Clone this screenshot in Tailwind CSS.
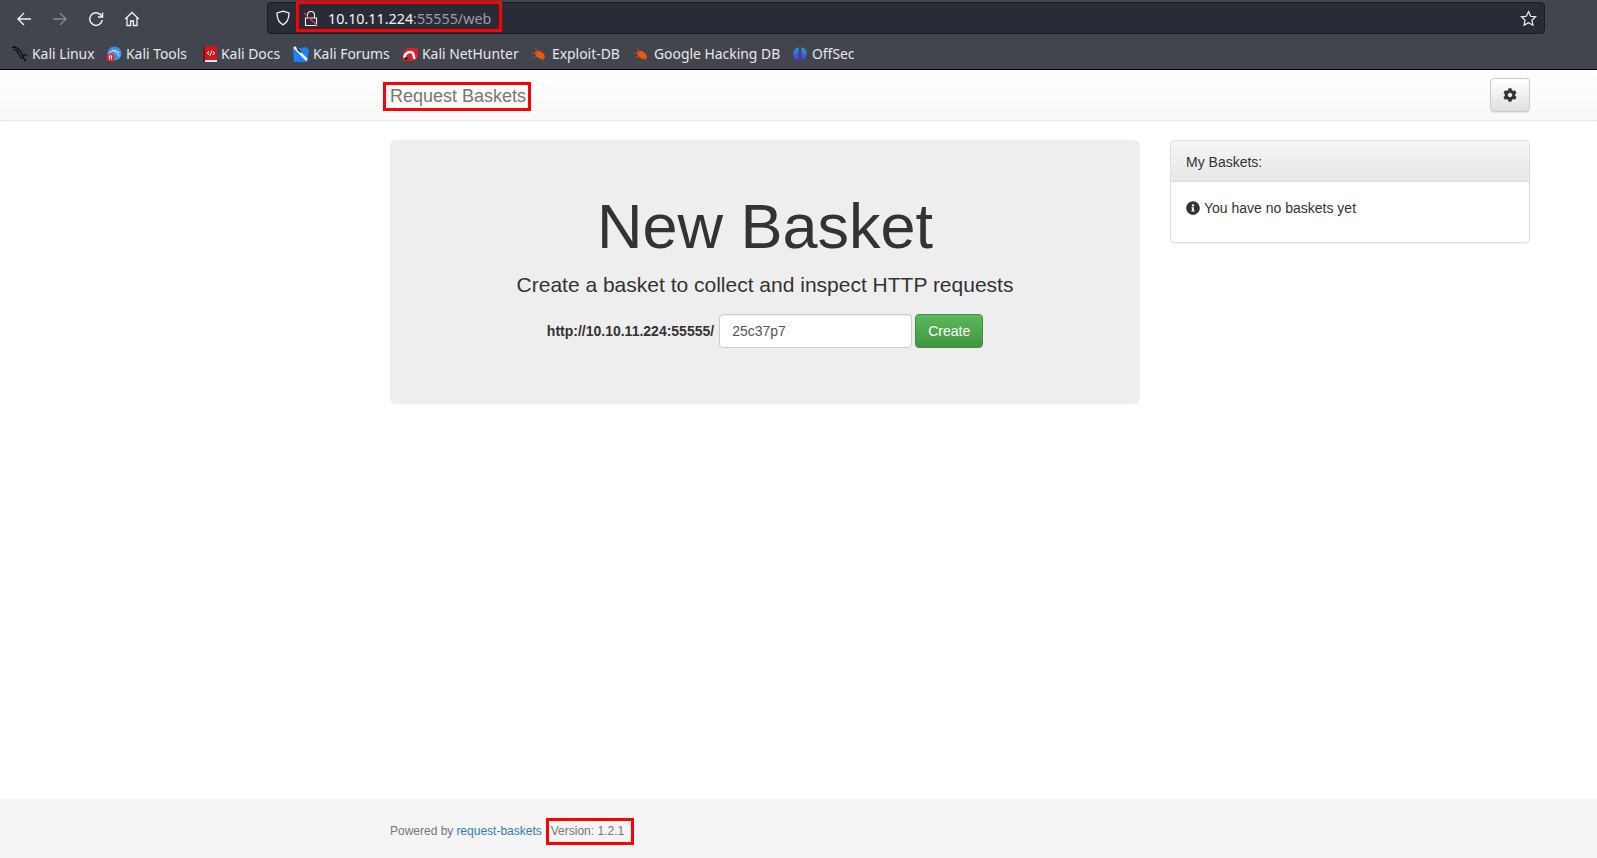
<!DOCTYPE html>
<html lang="en">

<head>
    <meta charset="UTF-8" />
    <title>Request Baskets</title>
    <script src="https://cdn.jsdelivr.net/npm/@tailwindcss/browser@4"></script>
</head>

<body class="relative h-[858px] w-[1597px] overflow-hidden bg-white font-['Liberation_Sans',sans-serif] text-[14px] text-[#333]">
    <!-- browser chrome -->
    <div class="h-[70px] bg-[#42454e] border-b border-black font-['Noto_Sans',sans-serif]">
        <div class="flex h-[36px] items-center pl-[16px]">
            <div class="mt-[2px] flex w-[251px] items-center gap-[20px] text-[#f2f2f2]">
                <svg class="w-[16px] h-[16px]" viewBox="0 0 16 16" fill="none" stroke="currentColor" stroke-width="1.400"><path d="M15 8H2M8 2L2 8l6 6" /></svg>
                <svg class="w-[16px] h-[16px] text-[#85878d]" viewBox="0 0 16 16" fill="none" stroke="currentColor" stroke-width="1.400"><path d="M1 8h13M8 2l6 6-6 6" /></svg>
                <svg class="w-[16px] h-[16px]" viewBox="0 0 16 16" fill="none" stroke="currentColor" stroke-width="1.500"><path d="M13.800 5.500A6.300 6.300 0 1 0 14.300 9" /><path d="M14.500 1.500v4.600H10" /></svg>
                <svg class="w-[16px] h-[16px]" viewBox="0 0 16 16" fill="none" stroke="currentColor" stroke-width="1.300"><path d="M1.200 8L8 1.500 14.800 8M3 6.500V14.500h3.600V10h2.800v4.500H13V6.500" /></svg>
            </div>
            <div class="flex h-[32px] w-[1278px] items-center rounded-[4px] border border-[#1b1c22] bg-[#292c37] pl-[7px] pr-[7px]">
                <svg class="w-[16px] h-[16px] text-[#f2f2f2]" viewBox="0 0 16 16" fill="none" stroke="currentColor" stroke-width="1.300"><path d="M8 1.200l6 1.800c0 5.500-1.500 9.500-6 11.800C3.500 12.500 2 8.500 2 3z" /></svg>
                <svg class="ml-[12px] w-[16px] h-[17px] text-[#f2f2f2]" viewBox="0 0 16 17" fill="none" stroke="currentColor" stroke-width="1.100"><path d="M4.500 8V5a3.500 3.500 0 0 1 7 0v3M2.500 8h11v7.500h-11z" /><path d="M1 3l13.500 13" stroke="#ff2f4a" stroke-width="1.200" /></svg>
                <span class="ml-[9px] mt-[2px] text-[14.300px] text-[#f5f5f5]">10.10.11.224<span class="text-[#9a9ca3]">:55555/web</span></span>
                <svg class="ml-auto mt-[1px] w-[17px] h-[17px] text-[#f2f2f2]" viewBox="0 0 16 16" fill="none" stroke="currentColor" stroke-width="1.100"><path d="M8 1.500l2 4.400 4.700.5-3.500 3.200 1 4.700L8 11.900l-4.200 2.400 1-4.700L1.300 6.400 6 5.900z" /></svg>
            </div>
        </div>
        <div class="flex h-[33px] items-center pt-[4px] text-[13.900px] text-[#e8e8ea]">
            <span class="ml-[12px] flex w-[94px] items-center gap-[4px]">
                <svg class="w-[16px] h-[16px] shrink-0" viewBox="0 0 16 16" fill="none" stroke="#0b0b0b" stroke-width="1.200"><path d="M0 1.500c3-.5 5 .3 7 2 2 1.800 3 4 3.500 6 .4 1.800 1.500 3.500 3.500 5.500M1.500 3.500c2 .2 3.500 1 5 2.500M2 .5l3 1.500M5 6.500c1.500.5 2.500 1.500 3 3 .5 1.500 1 2.500 2 3.500M11 9c1.500-.5 3-.5 4 .5" /></svg>
                Kali Linux
            </span>
            <span class="flex w-[97px] items-center gap-[4px]">
                <svg class="w-[16px] h-[16px] shrink-0" viewBox="0 0 16 16"><circle cx="8.500" cy="7.500" r="7" fill="#3f8fe8" /><path d="M2.500 8c3-4 7-4.500 11-1M6 4c3 1 5.500 3 7.500 6.500" fill="none" stroke="#dcecff" stroke-width="1" /><circle cx="4.500" cy="11.500" r="4" fill="#e8262c" /><path d="M2.800 10h3.400M3.500 10v3.500M5.500 10v3.500" stroke="#fff" stroke-width="1" /></svg>
                Kali Tools
            </span>
            <span class="flex w-[90px] items-center gap-[4px]">
                <svg class="w-[14px] h-[16px] shrink-0" viewBox="0 0 14 16"><path d="M0 1h2v15H0z" fill="#7d1414" /><path d="M2 0h12v14H2z" fill="#d0161b" /><path d="M2 14h12v2H2z" fill="#e9e9e9" /><path d="M6 5L4.500 7 6 9M10 5l1.500 2L10 9M8.800 4.500L7.200 9.500" fill="none" stroke="#fff" stroke-width="1" /></svg>
                Kali Docs
            </span>
            <span class="flex w-[109px] items-center gap-[4px]">
                <svg class="w-[16px] h-[16px] shrink-0" viewBox="0 0 16 16"><path d="M0 3L13 1l3 3-2 12H1z" fill="#1f7ff0" /><path d="M1 1l13 13" stroke="#f2f2f2" stroke-width="2.500" /><path d="M4 2.500l4 4" stroke="#222" stroke-width="1.500" /></svg>
                Kali Forums
            </span>
            <span class="flex w-[130px] items-center gap-[4px]">
                <svg class="w-[16px] h-[16px] shrink-0" viewBox="0 0 16 16"><path d="M5 2h11v9l-3 4H1V6z" fill="#d51f2d" /><path d="M2.500 12a5.500 5.500 0 0 1 8.500-5l1.500 6" fill="none" stroke="#f5f5f5" stroke-width="2.500" /><circle cx="4" cy="12.500" r="1.500" fill="#222" /></svg>
                Kali NetHunter
            </span>
            <span class="flex w-[102px] items-center gap-[6px]">
                <svg class="w-[14px] h-[14px] shrink-0" viewBox="0 0 14 14"><ellipse cx="8" cy="8" rx="5.500" ry="3.500" transform="rotate(35 8 8)" fill="#e8590f" /><path d="M0 6h5M1 11l4-2M3 1l3 4M12 14l-2-3" stroke="#b94a10" stroke-width="1" /></svg>
                Exploit-DB
            </span>
            <span class="flex w-[159px] items-center gap-[6px]">
                <svg class="w-[14px] h-[14px] shrink-0" viewBox="0 0 14 14"><ellipse cx="8" cy="8" rx="5.500" ry="3.500" transform="rotate(35 8 8)" fill="#e8590f" /><path d="M0 6h5M1 11l4-2M3 1l3 4M12 14l-2-3" stroke="#b94a10" stroke-width="1" /></svg>
                Google Hacking DB
            </span>
            <span class="flex items-center gap-[5px]">
                <svg class="w-[14px] h-[16px] shrink-0" viewBox="0 0 14 16">
                    <defs><linearGradient id="offsec" x1="0" y1="0" x2="0" y2="1"><stop offset="0" stop-color="#1aa5d8" /><stop offset="1" stop-color="#4a35c8" /></linearGradient></defs>
                    <path d="M5.500 1.200A7 7 0 0 0 5.500 14.800z" fill="url(#offsec)" />
                    <path d="M8.500 1.200A7 7 0 0 1 8.500 14.800z" fill="url(#offsec)" />
                    <path d="M7 3v13" stroke="#5a2fd0" stroke-width="1.200" />
                </svg>
                OffSec
            </span>
        </div>
    </div>

    <!-- navbar -->
    <nav class="flex h-[51px] items-center justify-between border-b border-[#e7e7e7] bg-gradient-to-b from-white to-[#f8f8f8] pl-[390px] pr-[67px] shadow-[0_1px_5px_rgba(0,0,0,0.04)]">
        <a class="pt-[2px] text-[18px] text-[#777]">Request Baskets</a>
        <button class="flex h-[34px] w-[40px] items-center justify-center rounded-[4px] border border-[#ccc] bg-gradient-to-b from-white to-[#e0e0e0] shadow-[0_1px_1px_rgba(0,0,0,0.08)]">
            <svg class="w-[14px] h-[14px] text-[#333]" viewBox="0 0 512 512" fill="currentColor"><path d="M487.400 315.700l-42.600-24.600c4.300-23.200 4.300-47 0-70.200l42.600-24.600c4.900-2.800 7.100-8.600 5.500-14-11.100-35.600-30-67.800-54.700-94.600-3.800-4.100-10-5.100-14.800-2.300L380.800 110c-17.900-15.400-38.500-27.300-60.800-35.100V25.800c0-5.600-3.900-10.500-9.400-11.700-36.700-8.200-74.300-7.800-109.200 0-5.500 1.200-9.400 6.100-9.400 11.700V75c-22.200 7.900-42.800 19.800-60.800 35.100L88.700 85.500c-4.900-2.800-11-1.900-14.800 2.300-24.700 26.700-43.600 58.900-54.700 94.600-1.700 5.400.6 11.200 5.500 14L67.300 221c-4.300 23.200-4.300 47 0 70.200l-42.600 24.600c-4.900 2.800-7.100 8.600-5.500 14 11.100 35.600 30 67.800 54.700 94.600 3.800 4.100 10 5.100 14.800 2.300l42.600-24.600c17.900 15.400 38.500 27.300 60.800 35.100v49.200c0 5.600 3.900 10.500 9.400 11.700 36.700 8.200 74.300 7.800 109.200 0 5.500-1.200 9.400-6.100 9.400-11.700v-49.200c22.200-7.900 42.800-19.800 60.800-35.100l42.600 24.600c4.900 2.800 11 1.900 14.800-2.300 24.700-26.700 43.600-58.900 54.700-94.600 1.500-5.500-.7-11.300-5.600-14.100zM256 336c-44.100 0-80-35.900-80-80s35.900-80 80-80 80 35.900 80 80-35.900 80-80 80z" /></svg>
        </button>
    </nav>

    <!-- main -->
    <main class="flex h-[678px] items-start pl-[390px] pt-[19px]">
        <section class="flex h-[264px] w-[750px] flex-col items-center rounded-[6px] bg-[#eee] pt-[52px]">
            <h1 class="text-[63px] leading-[69px]">New Basket</h1>
            <p class="mt-[9px] text-[21px] leading-[30px]">Create a basket to collect and inspect HTTP requests</p>
            <form class="mt-[14px] flex items-center">
                <label class="mr-[5px] font-bold">http://10.10.11.224:55555/</label>
                <input class="h-[34px] w-[193px] rounded-[4px] border border-[#ccc] bg-white px-[12px] text-[#555] shadow-[inset_0_1px_1px_rgba(0,0,0,0.075)]" value="25c37p7" />
                <button type="button" class="ml-[3px] h-[34px] w-[68px] rounded-[4px] border border-[#3e8f3e] bg-gradient-to-b from-[#5cb85c] to-[#419641] text-white">Create</button>
            </form>
        </section>
        <aside class="ml-[30px] h-[103px] w-[360px] rounded-[4px] border border-[#ddd] bg-white shadow-[0_1px_1px_rgba(0,0,0,0.05)]">
            <div class="flex h-[41px] items-center rounded-t-[3px] border-b border-[#ddd] bg-gradient-to-b from-[#f5f5f5] to-[#e8e8e8] px-[15px] pt-[2px]">My Baskets:</div>
            <div class="flex items-center gap-[4px] px-[15px] pt-[16px] leading-[20px]">
                <svg class="w-[14px] h-[14px] text-[#333]" viewBox="0 0 512 512" fill="currentColor"><path d="M256 8C119 8 8 119 8 256c0 137 111 248 248 248s248-111 248-248C504 119 393 8 256 8zm0 110c23.200 0 42 18.800 42 42s-18.800 42-42 42-42-18.800-42-42 18.800-42 42-42zm56 254c0 6.600-5.400 12-12 12h-88c-6.600 0-12-5.400-12-12v-24c0-6.600 5.400-12 12-12h12v-64h-12c-6.600 0-12-5.400-12-12v-24c0-6.600 5.400-12 12-12h64c6.600 0 12 5.400 12 12v100h12c6.600 0 12 5.400 12 12v24z" /></svg>
                You have no baskets yet
            </div>
        </aside>
    </main>

    <!-- footer -->
    <footer class="flex h-[59px] items-center bg-[#f5f5f5] pl-[390px] pt-[5px] text-[12px] text-[#777]">
        Powered by <a class="ml-[3px] text-[#337ab7]">request-baskets</a>
        <span class="ml-[9px]">Version: 1.2.1</span>
    </footer>

    <!-- red annotation boxes drawn over the screenshot -->
    <div class="absolute left-[296px] top-[1px] h-[31px] w-[206px] border-[3px] border-[#f00]"></div>
    <div class="absolute left-[383px] top-[82px] h-[29px] w-[148px] border-[3px] border-[#f00]"></div>
    <div class="absolute left-[546px] top-[818px] h-[27px] w-[88px] border-[3px] border-[#f00]"></div>
</body>

</html>
